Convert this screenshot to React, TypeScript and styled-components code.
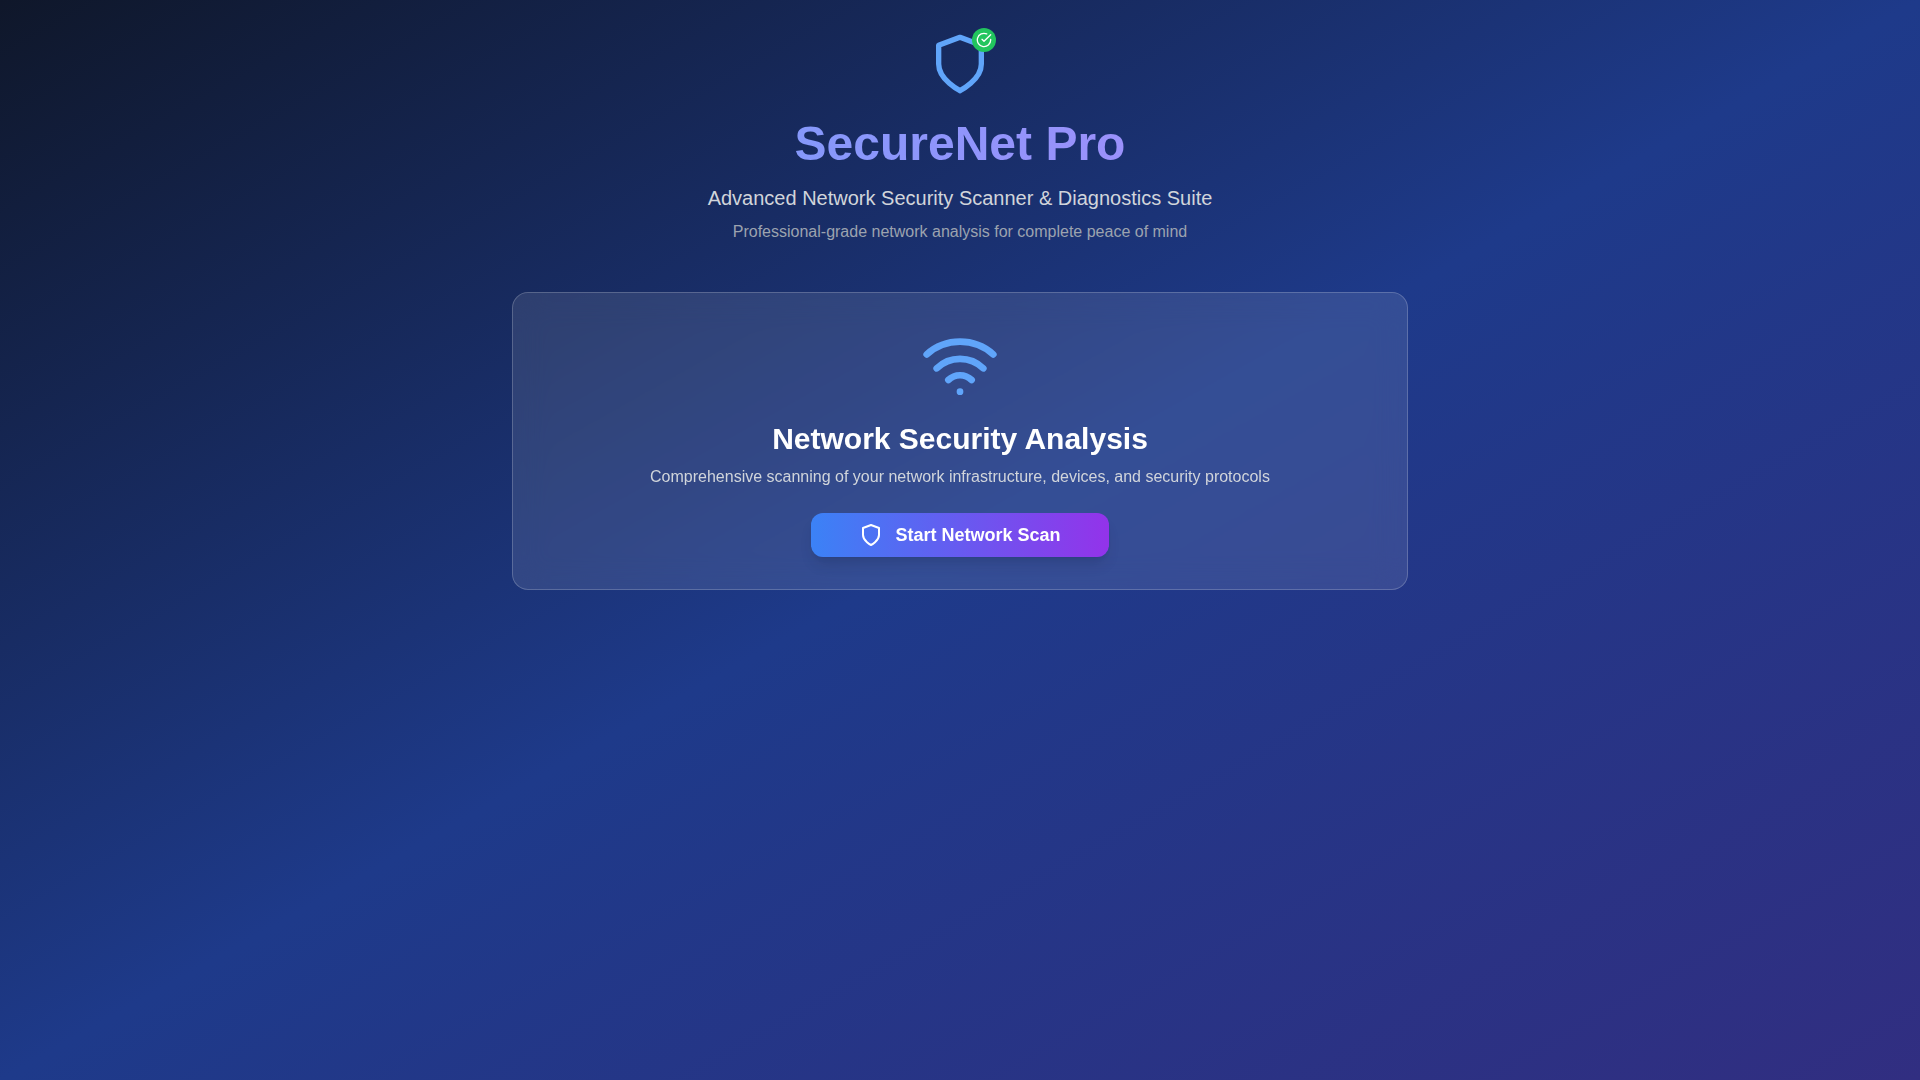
import React from 'react';
import styled, { createGlobalStyle } from 'styled-components';

const GlobalStyle = createGlobalStyle`
  *, *::before, *::after { box-sizing: border-box; }
  body {
    margin: 0;
    font-family: "Liberation Sans", Arial, sans-serif;
    line-height: 24px;
    -webkit-font-smoothing: antialiased;
  }
  h1, h2, p { margin: 0; }
`;

const Page = styled.div`
  min-height: 100vh;
  background: linear-gradient(to bottom right, #0f172a, #1e3a8a, #312e81);
`;

const Container = styled.main`
  max-width: 1536px;
  margin: 0 auto;
  padding: 32px 16px;
`;

const Header = styled.header`
  display: flex;
  flex-direction: column;
  align-items: center;
  text-align: center;
  margin-bottom: 48px;
`;

const Emblem = styled.div`
  position: relative;
  height: 64px;
  margin-bottom: 24px;
  color: #60a5fa;
`;

const Icon = styled.svg<{ $size: number }>`
  display: block;
  width: ${(p) => p.$size}px;
  height: ${(p) => p.$size}px;
  fill: none;
  stroke: currentColor;
  stroke-width: 2;
  stroke-linecap: round;
  stroke-linejoin: round;
`;

const Badge = styled.span`
  position: absolute;
  top: -4px;
  right: -4px;
  padding: 4px;
  border-radius: 50%;
  background: #22c55e;
  color: #fff;
`;

const Title = styled.h1`
  align-self: stretch;
  margin-bottom: 16px;
  font-size: 48px;
  line-height: 48px;
  font-weight: 700;
  color: transparent;
  background: linear-gradient(to right, #60a5fa, #c084fc);
  background-clip: text;
  -webkit-background-clip: text;
`;

const Tagline = styled.p`
  margin-bottom: 8px;
  font-size: 20px;
  line-height: 28px;
  color: #d1d5db;
`;

const Note = styled.p`
  font-size: 16px;
  color: #9ca3af;
`;

const Card = styled.section`
  display: flex;
  flex-direction: column;
  align-items: center;
  max-width: 896px;
  margin: 0 auto;
  padding: 32px;
  text-align: center;
  color: #fff;
  background: rgba(255, 255, 255, 0.1);
  backdrop-filter: blur(16px);
  border: 1px solid rgba(255, 255, 255, 0.2);
  border-radius: 16px;
`;

const CardIcon = styled.div`
  margin-bottom: 16px;
  color: #60a5fa;
`;

const CardTitle = styled.h2`
  margin-bottom: 8px;
  font-size: 30px;
  line-height: 36px;
  font-weight: 700;
`;

const CardText = styled.p`
  margin-bottom: 24px;
  font-size: 16px;
  color: #d1d5db;
`;

const ScanButton = styled.button`
  display: flex;
  align-items: center;
  gap: 12px;
  padding: 8px 48px;
  border: 0;
  border-radius: 12px;
  font: inherit;
  font-size: 18px;
  line-height: 28px;
  font-weight: 700;
  color: #fff;
  cursor: pointer;
  background: linear-gradient(to right, #3b82f6, #9333ea);
  box-shadow: 0 10px 15px -3px rgba(0, 0, 0, 0.1), 0 4px 6px -4px rgba(0, 0, 0, 0.1);
`;

const ShieldIcon = ({ size }: { size: number }) => (
  <Icon $size={size} viewBox="0 0 24 24" aria-hidden="true">
    <path d="M12 22s8-4 8-10V5l-8-3-8 3v7c0 6 8 10 8 10" />
  </Icon>
);

const CheckIcon = ({ size }: { size: number }) => (
  <Icon $size={size} viewBox="0 0 24 24" aria-hidden="true">
    <path d="M22 11.08V12a10 10 0 1 1-5.93-9.14" />
    <path d="m9 11 3 3L22 4" />
  </Icon>
);

const WifiIcon = ({ size }: { size: number }) => (
  <Icon $size={size} viewBox="0 0 24 24" aria-hidden="true">
    <path d="M5 13a10 10 0 0 1 14 0" />
    <path d="M8.5 16.5a5 5 0 0 1 7 0" />
    <path d="M2 8.82a15 15 0 0 1 20 0" />
    <path d="M12 20h.01" />
  </Icon>
);

export default function App() {
  return (
    <Page>
      <GlobalStyle />
      <Container>
        <Header>
          <Emblem>
            <ShieldIcon size={64} />
            <Badge>
              <CheckIcon size={16} />
            </Badge>
          </Emblem>
          <Title>SecureNet Pro</Title>
          <Tagline>Advanced Network Security Scanner &amp; Diagnostics Suite</Tagline>
          <Note>Professional-grade network analysis for complete peace of mind</Note>
        </Header>
        <Card>
          <CardIcon>
            <WifiIcon size={80} />
          </CardIcon>
          <CardTitle>Network Security Analysis</CardTitle>
          <CardText>
            Comprehensive scanning of your network infrastructure, devices, and security protocols
          </CardText>
          <ScanButton type="button">
            <ShieldIcon size={24} />
            Start Network Scan
          </ScanButton>
        </Card>
      </Container>
    </Page>
  );
}
